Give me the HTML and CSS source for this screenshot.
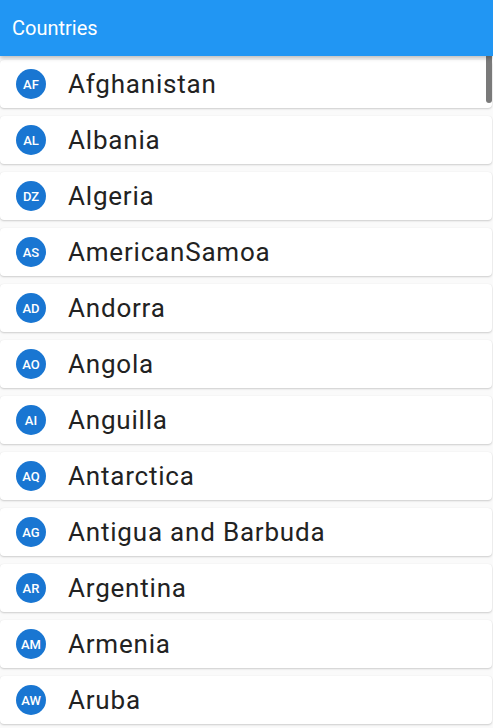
FILE: index.html
```html
<!DOCTYPE html>
<html>
<head>
<meta charset="utf-8">
<link rel="stylesheet" href="styles.css">
</head>
<body>
<header class="appbar"><span class="title">Countries</span></header>
<main class="list">
  <div class="card"><span class="avatar">AF</span><span class="name">Afghanistan</span></div>
  <div class="card"><span class="avatar">AL</span><span class="name">Albania</span></div>
  <div class="card"><span class="avatar">DZ</span><span class="name">Algeria</span></div>
  <div class="card"><span class="avatar">AS</span><span class="name">AmericanSamoa</span></div>
  <div class="card"><span class="avatar">AD</span><span class="name">Andorra</span></div>
  <div class="card"><span class="avatar">AO</span><span class="name">Angola</span></div>
  <div class="card"><span class="avatar">AI</span><span class="name">Anguilla</span></div>
  <div class="card"><span class="avatar">AQ</span><span class="name">Antarctica</span></div>
  <div class="card"><span class="avatar">AG</span><span class="name">Antigua and Barbuda</span></div>
  <div class="card"><span class="avatar">AR</span><span class="name">Argentina</span></div>
  <div class="card"><span class="avatar">AM</span><span class="name">Armenia</span></div>
  <div class="card"><span class="avatar">AW</span><span class="name">Aruba</span></div>
  <div class="scrollthumb"></div>
</main>
</body>
</html>
```
FILE: styles.css
```css
* { box-sizing: border-box; }
html, body { margin: 0; padding: 0; }
body {
  width: 493px;
  height: 728px;
  overflow: hidden;
  background: #fafafa;
  font-family: Roboto, "Liberation Sans", sans-serif;
}
.appbar {
  position: relative;
  z-index: 2;
  height: 56px;
  background: #2196f3;
  display: flex;
  align-items: center;
  padding-left: 12px;
  box-shadow: 0 2px 4px rgba(0,0,0,0.25);
}
.title {
  color: #fff;
  font-size: 20px;
  font-weight: 400;
}
.list {
  position: relative;
  height: 672px;
  overflow: hidden;
  padding-top: 4px;
  padding-right: 1px;
}
.card {
  height: 48px;
  margin-bottom: 8px;
  background: #fff;
  border-radius: 4px;
  box-shadow: 0 1px 2px rgba(0,0,0,0.18), 0 0 1px rgba(0,0,0,0.08);
  display: flex;
  align-items: center;
  padding-left: 16px;
}
.avatar {
  width: 30px;
  height: 30px;
  border-radius: 50%;
  background: #1976d2;
  color: #fff;
  font-size: 13px;
  font-weight: 500;
  display: flex;
  align-items: center;
  justify-content: center;
  flex: none;
}
.name {
  margin-left: 22px;
  font-size: 26px;
  letter-spacing: 0.8px;
  color: #222;
}
.scrollthumb {
  position: absolute;
  top: 0;
  right: 1px;
  width: 6px;
  height: 47px;
  border-radius: 0 0 3px 3px;
  background: #7a7a7a;
}
```
